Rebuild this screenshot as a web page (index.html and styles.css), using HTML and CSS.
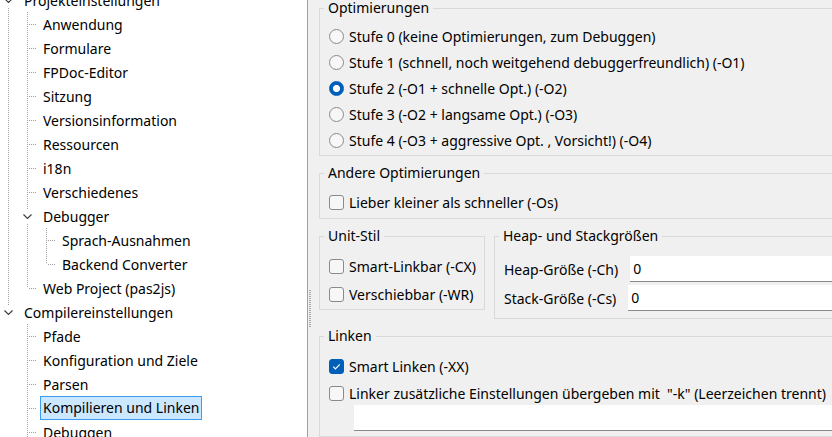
FILE: index.html
```html
<!DOCTYPE html>
<html lang="de">
<head>
<meta charset="utf-8">
<title>Projektoptionen</title>
<link rel="stylesheet" href="styles.css">
</head>
<body>
<div class="app">
  <nav class="tree">
    <ul class="tree-list">
      <li class="node l0">
        <div class="row"><span class="gut"><span class="exp"><svg width="9" height="5" viewBox="0 0 9 5"><polyline points="0.5,0.5 4.5,4.5 8.5,0.5" fill="none" stroke="#3a3a3a" stroke-width="1.1"/></svg></span></span><span class="label">Projekteinstellungen</span></div>
        <ul>
          <li class="node l1"><div class="row"><span class="gut"></span><span class="label">Anwendung</span></div></li>
          <li class="node l1"><div class="row"><span class="gut"></span><span class="label">Formulare</span></div></li>
          <li class="node l1"><div class="row"><span class="gut"></span><span class="label">FPDoc-Editor</span></div></li>
          <li class="node l1"><div class="row"><span class="gut"></span><span class="label">Sitzung</span></div></li>
          <li class="node l1"><div class="row"><span class="gut"></span><span class="label">Versionsinformation</span></div></li>
          <li class="node l1"><div class="row"><span class="gut"></span><span class="label">Ressourcen</span></div></li>
          <li class="node l1"><div class="row"><span class="gut"></span><span class="label">i18n</span></div></li>
          <li class="node l1"><div class="row"><span class="gut"></span><span class="label">Verschiedenes</span></div></li>
          <li class="node l1">
            <div class="row"><span class="gut"><span class="exp"><svg width="9" height="5" viewBox="0 0 9 5"><polyline points="0.5,0.5 4.5,4.5 8.5,0.5" fill="none" stroke="#3a3a3a" stroke-width="1.1"/></svg></span></span><span class="label">Debugger</span></div>
            <ul>
              <li class="node l2"><div class="row"><span class="gut"></span><span class="label">Sprach-Ausnahmen</span></div></li>
              <li class="node l2 last"><div class="row"><span class="gut"></span><span class="label">Backend Converter</span></div></li>
            </ul>
          </li>
          <li class="node l1 last"><div class="row"><span class="gut"></span><span class="label">Web Project (pas2js)</span></div></li>
        </ul>
      </li>
      <li class="node l0 last">
        <div class="row"><span class="gut"><span class="exp"><svg width="9" height="5" viewBox="0 0 9 5"><polyline points="0.5,0.5 4.5,4.5 8.5,0.5" fill="none" stroke="#3a3a3a" stroke-width="1.1"/></svg></span></span><span class="label">Compilereinstellungen</span></div>
        <ul>
          <li class="node l1"><div class="row"><span class="gut"></span><span class="label">Pfade</span></div></li>
          <li class="node l1"><div class="row"><span class="gut"></span><span class="label">Konfiguration und Ziele</span></div></li>
          <li class="node l1"><div class="row"><span class="gut"></span><span class="label">Parsen</span></div></li>
          <li class="node l1"><div class="row"><span class="gut"></span><span class="label sel">Kompilieren und Linken</span></div></li>
          <li class="node l1"><div class="row"><span class="gut"></span><span class="label">Debuggen</span></div></li>
        </ul>
      </li>
    </ul>
  </nav>
  <div class="splitter"></div>
  <main class="pane">
    <fieldset class="group first">
      <legend>Optimierungen</legend>
      <div class="body b-opt">
        <div class="opt"><span class="radio"></span><span>Stufe 0 (keine Optimierungen, zum Debuggen)</span></div>
        <div class="opt"><span class="radio"></span><span>Stufe 1 (schnell, noch weitgehend debuggerfreundlich) (-O1)</span></div>
        <div class="opt"><span class="radio on"></span><span>Stufe 2 (-O1 + schnelle Opt.) (-O2)</span></div>
        <div class="opt"><span class="radio"></span><span>Stufe 3 (-O2 + langsame Opt.) (-O3)</span></div>
        <div class="opt"><span class="radio"></span><span>Stufe 4 (-O3 + aggressive Opt. , Vorsicht!) (-O4)</span></div>
      </div>
    </fieldset>
    <fieldset class="group">
      <legend>Andere Optimierungen</legend>
      <div class="body b-other">
        <div class="opt"><span class="check"></span><span>Lieber kleiner als schneller (-Os)</span></div>
      </div>
    </fieldset>
    <div class="pair">
      <fieldset class="group unit">
        <legend>Unit-Stil</legend>
        <div class="body b-unit">
          <div class="opt tall"><span class="check"></span><span>Smart-Linkbar (-CX)</span></div>
          <div class="opt tall"><span class="check"></span><span>Verschiebbar (-WR)</span></div>
        </div>
      </fieldset>
      <fieldset class="group heap">
        <legend>Heap- und Stackgrößen</legend>
        <div class="body b-heap">
          <div class="field-row"><span>Heap-Größe (-Ch)</span><input class="field" type="text" value="0"></div>
          <div class="field-row"><span>Stack-Größe (-Cs)</span><input class="field" type="text" value="0"></div>
        </div>
      </fieldset>
    </div>
    <fieldset class="group">
      <legend>Linken</legend>
      <div class="body b-link">
        <div class="opt"><span class="check on"><svg width="15" height="15" viewBox="0 0 15 15"><polyline points="4.2,7.6 6.4,9.8 10.8,5.3" fill="none" stroke="#fff" stroke-width="1.2"/></svg></span><span>Smart Linken (-XX)</span></div>
        <div class="opt"><span class="check"></span><span>Linker zusätzliche Einstellungen übergeben mit &nbsp;"-k" (Leerzeichen trennt)</span></div>
        <input class="field wide" type="text" value="">
      </div>
    </fieldset>
  </main>
</div>
</body>
</html>
```

FILE: styles.css
```css
html, body {
  margin: 0;
  padding: 0;
  width: 832px;
  height: 437px;
  overflow: hidden;
}

body {
  font-family: "Noto Sans", "Segoe UI", sans-serif;
  font-size: 14px;
  color: #000;
  background: #f0f0f0;
}

.app {
  display: flex;
  height: 437px;
}

/* ---------- tree ---------- */
.tree {
  width: 307px;
  flex: none;
  background: #fff;
  border-right: 1px solid #a0a0a0;
  overflow: hidden;
}

.tree ul {
  list-style: none;
  margin: 0;
  padding: 0;
}

.tree .tree-list {
  margin-top: -12px;
}

.node {
  background-image: repeating-linear-gradient(to bottom, #a0a0a0 0 1px, transparent 1px 2px);
  background-repeat: no-repeat;
  background-size: 1px 100%;
}

.node.l0 { background-position: 8px 0; }
.node.l1 { background-position: 27px 0; }
.node.l2 { background-position: 46px 0; }
.node.last { background-size: 1px 12px; }

.row {
  height: 24px;
  display: flex;
  align-items: center;
  white-space: nowrap;
  background-image: repeating-linear-gradient(to right, #a0a0a0 0 1px, transparent 1px 2px);
  background-repeat: no-repeat;
  background-size: 7px 1px;
}

.l0 > .row { padding-left: 0; background-position: 10px 12px; }
.l1 > .row { padding-left: 19px; background-position: 29px 12px; }
.l2 > .row { padding-left: 38px; background-position: 48px 12px; }

.gut {
  width: 24px;
  height: 24px;
  flex: none;
  display: flex;
  align-items: center;
}

.exp {
  width: 17px;
  height: 14px;
  background: #fff;
  display: flex;
  align-items: center;
  justify-content: center;
}

.label {
  line-height: 22px;
  padding-top: 1px;
}

.label.sel {
  box-sizing: border-box;
  height: 24px;
  margin-left: -3px;
  padding: 0 2px;
  background: #cce8ff;
  border: 1px solid #3d9bf0;
}

/* ---------- splitter ---------- */
.splitter {
  width: 5px;
  flex: none;
  background-image: repeating-linear-gradient(to bottom, #a8a8a8 0 1px, transparent 1px 2px);
  background-repeat: no-repeat;
  background-size: 2px 38px;
  background-position: 1px 290px;
}

/* ---------- options pane ---------- */
.pane {
  flex: none;
  width: 640px;
  padding-left: 6px;
}

.group {
  margin: 7px 0 0;
  padding: 0;
  min-width: 0;
  border: 1px solid #d9d9d9;
}

.group.first {
  margin-top: -2px;
}

.group legend {
  margin-left: 4px;
  padding: 0 4px;
  line-height: 20px;
}

.body {
  padding-left: 9px;
}

.b-opt { padding-top: 5px; padding-bottom: 2px; }
.b-other { padding-top: 6px; padding-bottom: 3px; }
.b-unit { padding-top: 6px; padding-bottom: 1px; }
.b-heap { padding-top: 10px; padding-bottom: 7px; display: flex; flex-direction: column; gap: 3px; }
.b-link { padding-top: 7px; padding-bottom: 5px; display: flex; flex-direction: column; gap: 1px; }

.opt {
  height: 26px;
  display: flex;
  align-items: center;
  white-space: nowrap;
}

.opt.tall {
  height: 28px;
}

.radio,
.check {
  box-sizing: border-box;
  width: 15px;
  height: 15px;
  flex: none;
  margin-right: 5px;
  border: 1px solid #8a8a8a;
  background: #f7f7f7;
}

.radio {
  border-radius: 50%;
}

.radio.on {
  border-color: #005fb8;
  background: radial-gradient(circle at center, #fff 0 3.2px, #005fb8 3.9px);
}

.check {
  border-radius: 3px;
}

.check.on {
  border-color: #005fb8;
  background: #005fb8;
}

.check.on svg {
  display: block;
  margin: -1px;
}

.pair {
  display: flex;
  align-items: flex-start;
  gap: 9px;
}

.group.unit {
  width: 166px;
  box-sizing: border-box;
  flex: none;
}

.group.heap {
  flex: 1;
}

.field-row {
  display: flex;
  align-items: center;
  gap: 12px;
  white-space: nowrap;
}

.field {
  box-sizing: border-box;
  height: 26px;
  flex: 1;
  min-width: 0;
  margin: 0;
  padding: 0 3px;
  border: none;
  border-bottom: 1px solid #8a8a8a;
  background: #fff;
  font: inherit;
  color: #000;
  outline: none;
}

.field.wide {
  margin-top: -2px;
  margin-left: 25px;
  width: 600px;
  flex: none;
}
```
